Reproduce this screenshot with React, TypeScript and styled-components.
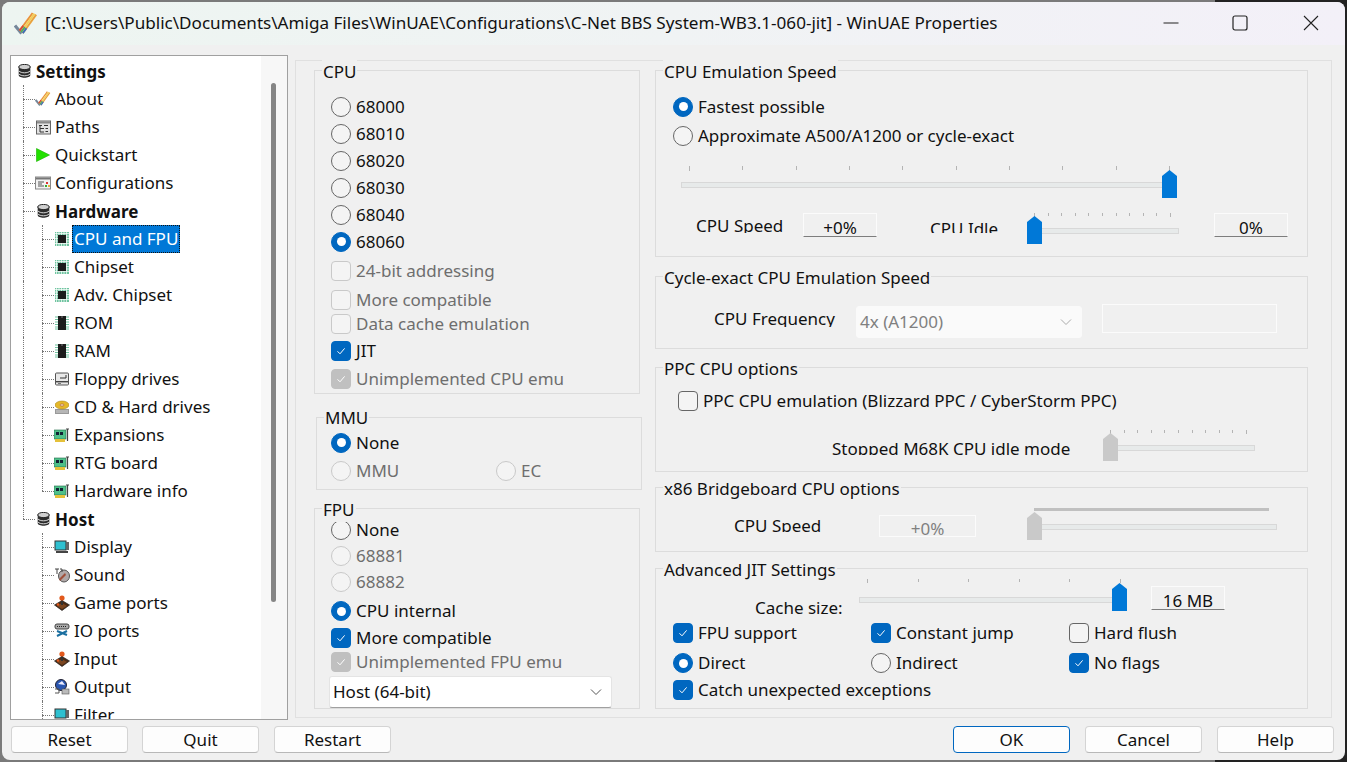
import React from "react";
import styled, { createGlobalStyle } from "styled-components";

const Global = createGlobalStyle`
  html, body { margin: 0; padding: 0; background: #242424; }
  * { box-sizing: border-box; }
  #root { width: 1347px; height: 762px; overflow: hidden; }
`;

const Desktop = styled.div`
  width: 1347px; height: 762px; padding: 2px;
  background: linear-gradient(90deg, #7a7a7a 0 1215px, #222 1215px);
  font-family: "Noto Sans", "Open Sans", sans-serif;
  font-size: 17px; line-height: 24px; color: #111;
`;
const Win = styled.div`
  width: 1343px; height: 758px; background: #f0f0f0; border-radius: 8px; overflow: hidden;
  display: flex; flex-direction: column;
`;
const TitleBar = styled.div`
  height: 43px; flex: none; display: flex; align-items: center; padding-left: 12px;
  background: linear-gradient(90deg, #edf5f1 0%, #f0f3f4 50%, #f3f0f8 100%);
`;
const TitleText = styled.div`
  margin: -2px 0 0 7px; font-size: 17.1px; white-space: nowrap; flex: 1;
`;
const WinControl = styled.div`
  width: 71px; height: 43px; display: flex; align-items: center; justify-content: center; flex: none;
  padding-bottom: 2px;
  &:first-child { padding-left: 4px; }
`;
const WinControls = styled.div`
  display: flex; margin-right: -1px;
`;
const Body = styled.div`
  flex: 1; display: flex; padding: 10px 0 0 8px; gap: 7px; min-height: 0;
`;
const TreeBox = styled.div`
  position: relative; width: 278px; height: 665px; background: #fff; border: 1px solid #a0a0a0;
  overflow: hidden; padding-top: 1px; flex: none;
`;
const ScrollTrack = styled.div`
  position: absolute; top: 0; right: 0; bottom: 0; width: 26px; background: #f7f7f7;
`;
const ScrollThumb = styled.div`
  position: absolute; left: 10px; top: 27px; width: 5px; height: 519px; background: #858585; border-radius: 3px;
`;
const TreeRowBox = styled.div<{ $level: number }>`
  position: relative; height: 28px; display: flex; align-items: center;
  padding-left: ${(p) => [5, 24, 43][p.$level]}px;
`;
const TreeIcon = styled.div`
  width: 16px; height: 16px; flex: none; display: flex; align-items: center; justify-content: center;
  position: relative; z-index: 1; background: #fff;
`;
const TreeLabel = styled.div<{ $bold?: boolean; $selected?: boolean }>`
  margin-left: 2px; height: 28px; padding: 0 1px; white-space: nowrap;
  line-height: ${(p) => (p.$bold ? 28 : 26)}px;
  border: 1px ${(p) => (p.$selected ? "dotted #111" : "solid transparent")};
  font-weight: ${(p) => (p.$bold ? 700 : 400)};
  background: ${(p) => (p.$selected ? "#0078d7" : "transparent")};
  color: ${(p) => (p.$selected ? "#fff" : "#111")};
`;
const GuideV = styled.div<{ $x: number; $to: number }>`
  position: absolute; width: 0; border-left: 1px dotted #777; top: 0;
  left: ${(p) => p.$x}px; bottom: ${(p) => 28 - p.$to}px;
`;
const GuideH = styled.div<{ $x: number; $w: number }>`
  position: absolute; height: 0; border-top: 1px dotted #777; top: 14px;
  left: ${(p) => p.$x}px; width: ${(p) => p.$w}px;
`;

const Panel = styled.div`
  width: 1037px; height: 658px; margin-top: 5px; border: 1px solid #e0e0e0; flex: none;
  padding: 9px 0 0 18px; display: flex; gap: 13px;
`;
const Column = styled.div<{ $w: number }>`
  width: ${(p) => p.$w}px; flex: none; display: flex; flex-direction: column;
`;
const Group = styled.div<{ $h: number; $top?: number; $left?: number; $w?: number; $pad?: number }>`
  position: relative; height: ${(p) => p.$h}px; border: 1px solid #dcdcdc; flex: none;
  margin-top: ${(p) => p.$top ?? 0}px; margin-left: ${(p) => p.$left ?? 0}px;
  width: ${(p) => (p.$w ? `${p.$w}px` : "auto")}; padding-top: ${(p) => p.$pad ?? 0}px;
`;
const Legend = styled.div<{ $y?: number }>`
  position: absolute; left: 7px; top: ${(p) => p.$y ?? -11}px; background: #f0f0f0; padding: 0 1px;
  white-space: nowrap;
`;
const Row = styled.div<{ $h?: number; $pl?: number; $top?: number }>`
  display: flex; align-items: center; height: ${(p) => (p.$h ? `${p.$h}px` : "auto")};
  padding-left: ${(p) => p.$pl ?? 14}px; margin-top: ${(p) => p.$top ?? 0}px;
`;
const TopRow = styled(Row)`
  align-items: flex-start;
`;
const OptionBox = styled.div<{ $w?: number; $off?: boolean }>`
  display: flex; align-items: center; gap: 5px; white-space: nowrap; flex: none;
  width: ${(p) => (p.$w ? `${p.$w}px` : "auto")};
  color: ${(p) => (p.$off ? "#6e6e6e" : "#111")};
`;
const RadioMark = styled.span<{ $on?: boolean; $off?: boolean }>`
  width: 20px; height: 20px; border-radius: 50%; flex: none; display: flex; align-items: center; justify-content: center;
  background: ${(p) => (p.$on ? "#0067c0" : "#f4f4f4")};
  border: 1px solid ${(p) => (p.$on ? "#0067c0" : p.$off ? "#c9c9c9" : "#666")};
  &::after { content: ""; width: 9px; height: 9px; border-radius: 50%; background: ${(p) => (p.$on ? "#fff" : "transparent")}; }
`;
const CheckMark = styled.span<{ $on?: boolean; $off?: boolean }>`
  width: 20px; height: 20px; border-radius: 4px; flex: none; display: flex; align-items: center; justify-content: center;
  background: ${(p) => (p.$on ? (p.$off ? "#c0c0c0" : "#0067c0") : "#f4f4f4")};
  border: 1px solid ${(p) => (p.$on ? (p.$off ? "#c0c0c0" : "#0067c0") : p.$off ? "#c9c9c9" : "#666")};
`;
const Label = styled.div<{ $w: number; $h: number; $top?: number; $left?: number }>`
  width: ${(p) => p.$w}px; height: ${(p) => p.$h}px;
  margin-top: ${(p) => p.$top ?? 0}px; margin-left: ${(p) => p.$left ?? 0}px;
  line-height: 26px; overflow: hidden; white-space: nowrap; flex: none;
`;
const ValueBox = styled.div<{ $left?: number; $top?: number }>`
  width: 74px; height: 24px; flex: none; text-align: center; line-height: 28px; overflow: hidden;
  margin-left: ${(p) => p.$left ?? 0}px; margin-top: ${(p) => p.$top ?? 0}px;
  border: 1px solid #fbfbfb; border-bottom-color: #7d7d7d;
`;
const DimBox = styled.div<{ $w: number; $h: number; $left?: number; $top?: number }>`
  width: ${(p) => p.$w}px; height: ${(p) => p.$h}px; flex: none; border: 1px solid #fbfbfb;
  margin-left: ${(p) => p.$left ?? 0}px; margin-top: ${(p) => p.$top ?? 0}px;
  color: #808080; text-align: center; line-height: 25px; overflow: hidden;
`;
const Select = styled.div<{ $w: number; $off?: boolean; $left?: number; $top?: number }>`
  width: ${(p) => p.$w}px; height: 32px; flex: none; display: flex; align-items: center; justify-content: space-between;
  padding: 0 9px 0 3px; border-radius: 3px; white-space: nowrap;
  margin-left: ${(p) => p.$left ?? 0}px; margin-top: ${(p) => p.$top ?? 0}px;
  background: ${(p) => (p.$off ? "#fafafa" : "#fff")}; color: ${(p) => (p.$off ? "#808080" : "#111")};
  border: 1px solid ${(p) => (p.$off ? "#fafafa" : "#e4e4e4")};
  border-bottom-color: ${(p) => (p.$off ? "#fafafa" : "#a0a0a0")};
`;
const Footer = styled.div`
  flex: none; height: 40px; display: flex; align-items: flex-start; padding: 6px 0 0 9px;
`;
const Btn = styled.div<{ $primary?: boolean; $left?: number }>`
  width: 117px; height: 27px; flex: none; display: flex; align-items: center; justify-content: center;
  background: #fdfdfd; border-radius: 4px; margin-left: ${(p) => p.$left ?? 0}px;
  border: 1px solid ${(p) => (p.$primary ? "#0067c0" : "#d4d4d4")};
  border-bottom-color: ${(p) => (p.$primary ? "#0067c0" : "#b8b8b8")};
`;

const Tick = () => (
  <svg width="12" height="12" viewBox="0 0 12 12" fill="none">
    <path d="M2.5 6.3 L5 8.8 L9.6 3.4" stroke="#fff" strokeWidth="1" />
  </svg>
);
const Radio = ({ t, on, off, w }: { t: string; on?: boolean; off?: boolean; w?: number }) => (
  <OptionBox $w={w} $off={off}><RadioMark $on={on} $off={off} />{t}</OptionBox>
);
const Check = ({ t, on, off, w }: { t: string; on?: boolean; off?: boolean; w?: number }) => (
  <OptionBox $w={w} $off={off}><CheckMark $on={on} $off={off}>{on && <Tick />}</CheckMark>{t}</OptionBox>
);
const Chevron = ({ c }: { c: string }) => (
  <svg width="12" height="8" viewBox="0 0 12 8" fill="none"><path d="M1 1.5 L6 6.5 L11 1.5" stroke={c} /></svg>
);

type SliderProps = {
  w: number; h: number; ticks: number[]; tickY: number; tickH?: number; thumbX: number; thumbY: number;
  trackY: number; off?: boolean; bar?: [number, number]; left?: number;
};
const SliderSvg = styled.svg<{ $left?: number }>`
  flex: none; display: block; margin-left: ${(p) => p.$left ?? 0}px;
`;
const Slider = ({ w, h, ticks, tickY, tickH = 3, thumbX, thumbY, trackY, off, bar, left }: SliderProps) => (
  <SliderSvg $left={left} width={w} height={h} viewBox={`0 0 ${w} ${h}`}>
    {ticks.map((x, i) => (
      <rect key={i} x={x} y={tickY} width="1" height={i === 0 || i === ticks.length - 1 ? tickH + 1 : tickH} fill="#b4b4b4" />
    ))}
    {bar && <rect x={bar[0]} y={tickY} width={bar[1] - bar[0]} height="3" fill="#c0c0c0" />}
    <rect x="0.5" y={trackY + 0.5} width={w - 1} height="5" fill="#e7eaea" stroke="#d8d8d8" />
    <path transform={`translate(${thumbX} ${thumbY})`} d="M0 28 V6 L7.5 0 L15 6 V28 Z" fill={off ? "#c9c9c9" : "#0078d7"} />
  </SliderSvg>
);

const LogoCheck = ({ s = 16 }: { s?: number }) => (
  <svg width={s} height={s} viewBox="0 0 24 24" fill="none">
    <path d="M1 13.5 L7.5 21.5" stroke="#75879a" strokeWidth="3" />
    <path d="M5.6 18.6 L18.6 1" stroke="#e9913a" strokeWidth="1.9" />
    <path d="M7.2 20 L20.4 1.6" stroke="#f3cf55" strokeWidth="1.9" />
    <path d="M8.8 21.2 L22.2 2.6" stroke="#e9a23c" strokeWidth="1.9" />
    <path d="M5.6 18.6 L9.2 13.7" stroke="#d64a3a" strokeWidth="1.9" />
    <path d="M7.2 20 L10.8 15" stroke="#4da862" strokeWidth="1.9" />
    <path d="M8.8 21.2 L12.4 16.2" stroke="#3a6fc0" strokeWidth="1.9" />
  </svg>
);
const Db = () => (
  <svg width="13" height="14" viewBox="0 0 13 14">
    <ellipse cx="6.5" cy="3" rx="5.8" ry="2.6" fill="#cfcfcf" stroke="#222" />
    <path d="M0.7 3 V11 C0.7 14.6 12.3 14.6 12.3 11 V3 C12.3 6 0.7 6 0.7 3Z" fill="#2c2c2c" />
    <path d="M1 7 C3 9.4 10 9.4 12 7 M1 10 C3 12.4 10 12.4 12 10" stroke="#ddd" fill="none" />
  </svg>
);
const Paths = () => (
  <svg width="15" height="15" viewBox="0 0 15 15">
    <rect x="0.5" y="1" width="14" height="13" fill="#e2e2e2" stroke="#666" />
    <rect x="1" y="1.5" width="13" height="2" fill="#8a8a8a" />
    <path d="M3 5.5 H6 M4 5.5 V12 H8 M4 8.5 H8 M8 5.5 H12 M9.5 8.5 H12 M9.5 11.5 H12" stroke="#333" fill="none" />
  </svg>
);
const Play = () => (
  <svg width="14" height="14" viewBox="0 0 14 14"><path d="M0.5 0.5 L13.5 7 L0.5 13.5 Z" fill="#22e000" stroke="#18b000" strokeWidth=".6" /></svg>
);
const Config = () => (
  <svg width="16" height="16" viewBox="0 0 16 16">
    <rect x="0.5" y="2" width="15" height="12" fill="#f2f2f2" stroke="#888" />
    <rect x="1" y="2.5" width="14" height="2" fill="#777" />
    <path d="M3 7 H9 M3 9 H7 M3 11 H9" stroke="#555" />
    <rect x="11" y="7" width="2" height="2" fill="#d33" /><rect x="10" y="10" width="2" height="2" fill="#3a3" /><rect x="13" y="10" width="2" height="2" fill="#e9b03a" />
  </svg>
);
const Chip = () => (
  <svg width="14" height="14" viewBox="0 0 14 14">
    <rect x="0" y="0" width="14" height="14" fill="#6fc4a0" />
    <path d="M1.5 0 V14 M4 0 V14 M6.5 0 V14 M9 0 V14 M11.5 0 V14 M0 1.5 H14 M0 4 H14 M0 6.5 H14 M0 9 H14 M0 11.5 H14" stroke="#fff" strokeWidth=".7" />
    <rect x="3" y="3" width="8" height="8" fill="#1c1c1c" />
  </svg>
);
const Rom = () => (
  <svg width="14" height="14" viewBox="0 0 14 14">
    <path d="M0 1 H14 M0 3.5 H14 M0 6 H14 M0 8.5 H14 M0 11 H14 M0 13 H14" stroke="#6fc4a0" strokeWidth="1.2" />
    <rect x="3" y="0" width="8" height="14" fill="#1c1c1c" />
    <path d="M7 0 V2" stroke="#777" />
  </svg>
);
const Floppy = () => (
  <svg width="14" height="14" viewBox="0 0 14 14">
    <rect x="0.5" y="1" width="13" height="12" fill="#e8e8e8" stroke="#555" rx="1" />
    <path d="M5 6 H11 V3" stroke="#333" fill="none" />
    <rect x="1" y="9" width="12" height="1.4" fill="#444" />
    <rect x="3" y="11" width="3" height="1" fill="#777" />
  </svg>
);
const Hdd = () => (
  <svg width="14" height="14" viewBox="0 0 14 14">
    <rect x="0" y="9" width="14" height="5" fill="#999" />
    <path d="M2 10 V13 M4 10 V13 M6 10 V13 M8 10 V13 M10 10 V13 M12 10 V13" stroke="#eee" strokeWidth=".7" />
    <ellipse cx="7" cy="5" rx="7" ry="4" fill="#e4b82a" stroke="#a07a10" strokeWidth=".5" />
    <ellipse cx="7" cy="5" rx="2" ry="1" fill="#fff4b0" stroke="#704" strokeWidth=".4" />
  </svg>
);
const Card = () => (
  <svg width="16" height="16" viewBox="0 0 16 16">
    <rect x="0" y="3" width="12" height="9" fill="#4fc08a" stroke="#1e6a48" strokeWidth=".6" />
    <rect x="2" y="5" width="3" height="3" fill="#123" /><rect x="6" y="5" width="3" height="3" fill="#123" />
    <rect x="1" y="12" width="10" height="3" fill="#e5c13a" />
    <path d="M12 2 H15 M13.5 2 V14" stroke="#444" strokeWidth="1.2" />
  </svg>
);
const Display = () => (
  <svg width="16" height="16" viewBox="0 0 16 16">
    <rect x="1" y="2" width="11" height="9" fill="#2fc0d0" stroke="#333" />
    <rect x="12" y="3" width="3" height="8" fill="#666" />
    <rect x="2" y="12" width="12" height="2" fill="#444" />
  </svg>
);
const Sound = () => (
  <svg width="16" height="16" viewBox="0 0 16 16">
    <ellipse cx="10" cy="9" rx="5.5" ry="6" fill="#b0a8a8" stroke="#555" />
    <path d="M5 12 L11 6 L12 8 L6 14 Z" fill="#a0503a" />
    <path d="M1 2 H5 M3 2 V7 M6 2 H8 V5" stroke="#444" fill="none" />
  </svg>
);
const Joy = () => (
  <svg width="16" height="16" viewBox="0 0 16 16">
    <path d="M0.5 10 L8 5.5 L15.5 10 L8 15.5 Z" fill="#4a2a14" stroke="#1c1c1c" strokeWidth=".7" />
    <path d="M3 11 L8 14 L13 11 L8 8 Z" fill="#7a4520" />
    <rect x="7" y="3" width="2" height="7" fill="#333" />
    <circle cx="8" cy="3" r="2.6" fill="#e2591c" />
    <circle cx="4" cy="9.5" r="1.3" fill="#e2591c" />
  </svg>
);
const Io = () => (
  <svg width="16" height="16" viewBox="0 0 16 16">
    <rect x="1" y="1" width="14" height="5" rx="2" fill="#aaa" stroke="#444" />
    <path d="M3 3.5 H13" stroke="#222" strokeDasharray="1 1" />
    <path d="M3 8 L13 12 M3 13 L13 8" stroke="#1b6fa0" strokeWidth="2" />
  </svg>
);
const Output = () => (
  <svg width="16" height="16" viewBox="0 0 16 16">
    <circle cx="7" cy="6" r="5.5" fill="#2a56b0" stroke="#223" />
    <path d="M4 5 L8 2 L11 6 Z" fill="#eef" />
    <rect x="8" y="10" width="7" height="5" fill="#bbb" stroke="#555" strokeWidth=".6" />
    <path d="M1 10 H5 V14 H1" stroke="#555" fill="none" />
  </svg>
);

type Item = { t: string; l: number; icon: React.ReactNode; bold?: boolean; sel?: boolean };
const items: Item[] = [
  { t: "Settings", l: 0, icon: <Db />, bold: true },
  { t: "About", l: 1, icon: <LogoCheck /> },
  { t: "Paths", l: 1, icon: <Paths /> },
  { t: "Quickstart", l: 1, icon: <Play /> },
  { t: "Configurations", l: 1, icon: <Config /> },
  { t: "Hardware", l: 1, icon: <Db />, bold: true },
  { t: "CPU and FPU", l: 2, icon: <Chip />, sel: true },
  { t: "Chipset", l: 2, icon: <Chip /> },
  { t: "Adv. Chipset", l: 2, icon: <Chip /> },
  { t: "ROM", l: 2, icon: <Rom /> },
  { t: "RAM", l: 2, icon: <Rom /> },
  { t: "Floppy drives", l: 2, icon: <Floppy /> },
  { t: "CD & Hard drives", l: 2, icon: <Hdd /> },
  { t: "Expansions", l: 2, icon: <Card /> },
  { t: "RTG board", l: 2, icon: <Card /> },
  { t: "Hardware info", l: 2, icon: <Card /> },
  { t: "Host", l: 1, icon: <Db />, bold: true },
  { t: "Display", l: 2, icon: <Display /> },
  { t: "Sound", l: 2, icon: <Sound /> },
  { t: "Game ports", l: 2, icon: <Joy /> },
  { t: "IO ports", l: 2, icon: <Io /> },
  { t: "Input", l: 2, icon: <Joy /> },
  { t: "Output", l: 2, icon: <Output /> },
  { t: "Filter", l: 2, icon: <Display /> },
];

const TreeRow = ({ item }: { item: Item }) => {
  const hostChild = items.indexOf(item) > 16;
  return (
    <TreeRowBox $level={item.l}>
      {item.l === 1 && <GuideV $x={12} $to={item.t === "Host" ? 14 : 28} />}
      {item.l === 1 && <GuideH $x={12} $w={12} />}
      {item.l === 2 && !hostChild && <GuideV $x={12} $to={28} />}
      {item.l === 2 && <GuideV $x={31} $to={item.t === "Hardware info" ? 14 : 28} />}
      {item.l === 2 && <GuideH $x={31} $w={12} />}
      <TreeIcon>{item.icon}</TreeIcon>
      <TreeLabel $bold={item.bold} $selected={item.sel}>{item.t}</TreeLabel>
    </TreeRowBox>
  );
};

const range = (a: number, b: number, n: number) =>
  Array.from({ length: n }, (_, i) => Math.round(a + ((b - a) * i) / (n - 1)));

export default function App() {
  return (
    <Desktop>
      <Global />
      <Win>
        <TitleBar>
          <LogoCheck s={24} />
          <TitleText>[C:\Users\Public\Documents\Amiga Files\WinUAE\Configurations\C-Net BBS System-WB3.1-060-jit] - WinUAE Properties</TitleText>
          <WinControls>
            <WinControl><svg width="16" height="16" viewBox="0 0 16 16"><path d="M0.5 8 H15.5" stroke="#222" strokeWidth="1.1" /></svg></WinControl>
            <WinControl><svg width="16" height="16" viewBox="0 0 16 16"><rect x="1" y="1" width="14" height="14" rx="2" fill="none" stroke="#222" strokeWidth="1.2" /></svg></WinControl>
            <WinControl><svg width="16" height="16" viewBox="0 0 16 16"><path d="M1 1 L15 15 M15 1 L1 15" stroke="#222" strokeWidth="1.1" /></svg></WinControl>
          </WinControls>
        </TitleBar>
        <Body>
          <TreeBox>
            {items.map((it) => <TreeRow key={it.t} item={it} />)}
            <ScrollTrack><ScrollThumb /></ScrollTrack>
          </TreeBox>
          <Panel>
            <Column $w={328}>
              <Group $h={324} $w={326} $pad={22}>
                <Legend>CPU</Legend>
                <Row $h={27} $pl={16}><Radio t="68000" /></Row>
                <Row $h={27} $pl={16}><Radio t="68010" /></Row>
                <Row $h={27} $pl={16}><Radio t="68020" /></Row>
                <Row $h={27} $pl={16}><Radio t="68030" /></Row>
                <Row $h={27} $pl={16}><Radio t="68040" /></Row>
                <Row $h={27} $pl={16}><Radio t="68060" on /></Row>
                <Row $h={32} $pl={16}><Check t="24-bit addressing" off /></Row>
                <Row $h={25} $pl={16}><Check t="More compatible" off /></Row>
                <Row $h={23} $pl={16}><Check t="Data cache emulation" off /></Row>
                <Row $h={31} $pl={16}><Check t="JIT" on /></Row>
                <Row $h={25} $pl={16}><Check t="Unimplemented CPU emu" on off /></Row>
              </Group>
              <Group $h={73} $w={326} $top={23} $left={2} $pad={11}>
                <Legend $y={-12}>MMU</Legend>
                <Row $h={27}><Radio t="None" on /></Row>
                <Row $h={29}><Radio t="MMU" off w={165} /><Radio t="EC" off /></Row>
              </Group>
              <Group $h={201} $w={326} $top={18} $pad={8}>
                <Legend>FPU</Legend>
                <Row $h={26} $pl={16}><Radio t="None" /></Row>
                <Row $h={26} $pl={16}><Radio t="68881" off /></Row>
                <Row $h={26} $pl={16}><Radio t="68882" off /></Row>
                <Row $h={32} $pl={16}><Radio t="CPU internal" on /></Row>
                <Row $h={21} $pl={16}><Check t="More compatible" on /></Row>
                <Row $h={27} $pl={16}><Check t="Unimplemented FPU emu" on off /></Row>
                <Select $w={283} $left={14} $top={1}>Host (64-bit)<Chevron c="#555" /></Select>
              </Group>
            </Column>
            <Column $w={653}>
              <Group $h={187} $pad={22}>
                <Legend>CPU Emulation Speed</Legend>
                <Row $h={27} $pl={17}><Radio t="Fastest possible" on /></Row>
                <Row $h={32} $pl={17}><Radio t="Approximate A500/A1200 or cycle-exact" /></Row>
                <Row $pl={25} $top={13}>
                  <Slider w={496} h={34} ticks={range(8, 488, 10)} tickY={1} tickH={4} thumbX={481} thumbY={5} trackY={17} />
                </Row>
                <TopRow $pl={40} $top={14}>
                  <Label $w={107} $h={20}>CPU Speed</Label>
                  <ValueBox>+0%</ValueBox>
                  <Label $w={97} $h={17} $top={3} $left={53}>CPU Idle</Label>
                  <Slider w={152} h={31} ticks={range(7, 143, 11)} tickY={0} thumbX={0} thumbY={3} trackY={15} />
                  <ValueBox $left={35}>0%</ValueBox>
                </TopRow>
              </Group>
              <Group $h={73} $top={19} $pad={27}>
                <Legend>Cycle-exact CPU Emulation Speed</Legend>
                <TopRow $pl={58}>
                  <Label $w={142} $h={21} $top={2}>CPU Frequency</Label>
                  <Select $w={226} $off $top={2}>4x (A1200)<Chevron c="#aaa" /></Select>
                  <DimBox $w={175} $h={29} $left={20} />
                </TopRow>
              </Group>
              <Group $h={105} $top={18} $pad={21}>
                <Legend>PPC CPU options</Legend>
                <Row $h={24} $pl={22}><Check t="PPC CPU emulation (Blizzard PPC / CyberStorm PPC)" /></Row>
                <TopRow $pl={176} $top={17}>
                  <Label $w={271} $h={19} $top={6}>Stopped M68K CPU idle mode</Label>
                  <Slider w={152} h={31} ticks={range(7, 143, 11)} tickY={0} thumbX={0} thumbY={3} trackY={15} off />
                </TopRow>
              </Group>
              <Group $h={65} $top={15} $pad={20}>
                <Legend>x86 Bridgeboard CPU options</Legend>
                <TopRow $pl={78}>
                  <Label $w={145} $h={19} $top={5}>CPU Speed</Label>
                  <DimBox $w={97} $h={22} $top={7}>+0%</DimBox>
                  <Slider w={250} h={32} left={51} ticks={[]} bar={[7, 242]} tickY={0} thumbX={0} thumbY={4} trackY={16} off />
                </TopRow>
              </Group>
              <Group $h={141} $top={16} $pad={10}>
                <Legend>Advanced JIT Settings</Legend>
                <TopRow $pl={99}>
                  <Label $w={104} $h={25} $top={16}>Cache size:</Label>
                  <Slider w={268} h={33} ticks={range(8, 261, 6)} tickY={0} tickH={3} thumbX={253} thumbY={4} trackY={18} />
                  <ValueBox $left={24} $top={7}>16 MB</ValueBox>
                </TopRow>
                <Row $h={26} $pl={17}>
                  <Check t="FPU support" on w={198} /><Check t="Constant jump" on w={198} /><Check t="Hard flush" />
                </Row>
                <Row $h={30} $pl={17} $top={2}>
                  <Radio t="Direct" on w={198} /><Radio t="Indirect" w={198} /><Check t="No flags" on />
                </Row>
                <Row $h={24} $pl={17}><Check t="Catch unexpected exceptions" on /></Row>
              </Group>
            </Column>
          </Panel>
        </Body>
        <Footer>
          <Btn>Reset</Btn>
          <Btn $left={14}>Quit</Btn>
          <Btn $left={15}>Restart</Btn>
          <Btn $primary $left={562}>OK</Btn>
          <Btn $left={15}>Cancel</Btn>
          <Btn $left={15}>Help</Btn>
        </Footer>
      </Win>
    </Desktop>
  );
}
